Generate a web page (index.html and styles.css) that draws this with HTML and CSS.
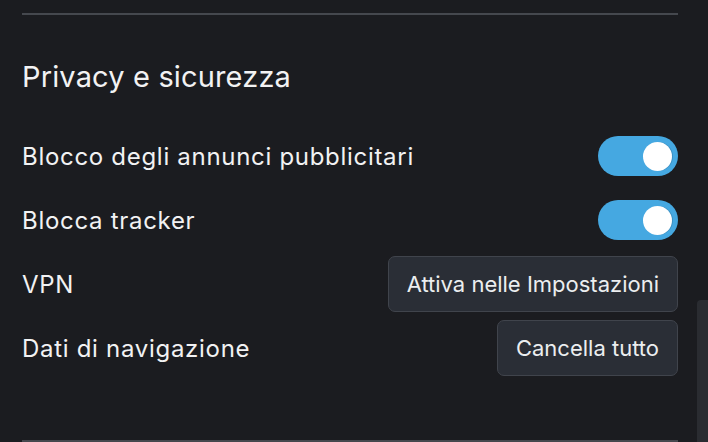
FILE: index.html
```html
<!DOCTYPE html>
<html lang="it">
<head>
    <meta charset="UTF-8">
    <meta name="viewport" content="width=device-width, initial-scale=1.0">
    <title>Impostazioni</title>
    <link rel="stylesheet" href="styles.css">
</head>
<body>

<div class="settings">
    <hr class="divider">

    <section class="section">
        <h2 class="sectionTitle">Privacy e sicurezza</h2>

        <div class="row">
            <span class="label">Blocco degli annunci pubblicitari</span>
            <button class="toggle on" aria-pressed="true"><span class="knob"></span></button>
        </div>

        <div class="row">
            <span class="label">Blocca tracker</span>
            <button class="toggle on" aria-pressed="true"><span class="knob"></span></button>
        </div>

        <div class="row">
            <span class="label">VPN</span>
            <button class="actionButton">Attiva nelle Impostazioni</button>
        </div>

        <div class="row">
            <span class="label">Dati di navigazione</span>
            <button class="actionButton">Cancella tutto</button>
        </div>
    </section>

    <hr class="divider bottom">
</div>

<!-- scrollbar overlay on the right edge -->
<div class="scrollThumb"></div>

</body>
</html>
```

FILE: styles.css
```css
/* Global Styles */
body {
    font-family: 'Inter', 'Noto Sans', sans-serif;
    background: #1b1c20;
    margin: 0;
    padding: 0;
    color: #f2f2f3;
    overflow: hidden;
}

/* Main Content Area */
.settings {
    padding: 13px 30px 0 22px;
}

.divider {
    border: none;
    height: 2px;
    margin: 0;
    background: #45484e;
}

.divider.bottom {
    margin-top: 60px;
}

.sectionTitle {
    font-size: 29px;
    font-weight: 400;
    letter-spacing: 0.15px;
    margin: 0;
    padding: 46px 0 31px;
    line-height: 32px;
}

.row {
    display: flex;
    justify-content: space-between;
    align-items: center;
    height: 64px;
}

.label {
    font-size: 24px;
    letter-spacing: 0.7px;
}

/* Toggle */
.toggle {
    width: 80px;
    height: 40px;
    border: none;
    border-radius: 20px;
    background: #45a8e1;
    padding: 0 6px;
    display: flex;
    align-items: center;
    justify-content: flex-end;
    cursor: pointer;
}

.knob {
    width: 29px;
    height: 29px;
    border-radius: 50%;
    background: #ffffff;
    box-shadow: 1px 0 0 #3b8fc2;
}

/* Buttons */
.actionButton {
    font-family: inherit;
    font-size: 22px;
    color: #eceef0;
    background: #2a2e36;
    border: 1px solid #40444c;
    border-radius: 7px;
    height: 56px;
    padding: 0 18px;
    cursor: pointer;
}

.scrollThumb {
    position: fixed;
    right: 0;
    top: 300px;
    width: 11px;
    bottom: 0;
    background: #2a2c31;
    border-radius: 4px 0 0 0;
}
```
